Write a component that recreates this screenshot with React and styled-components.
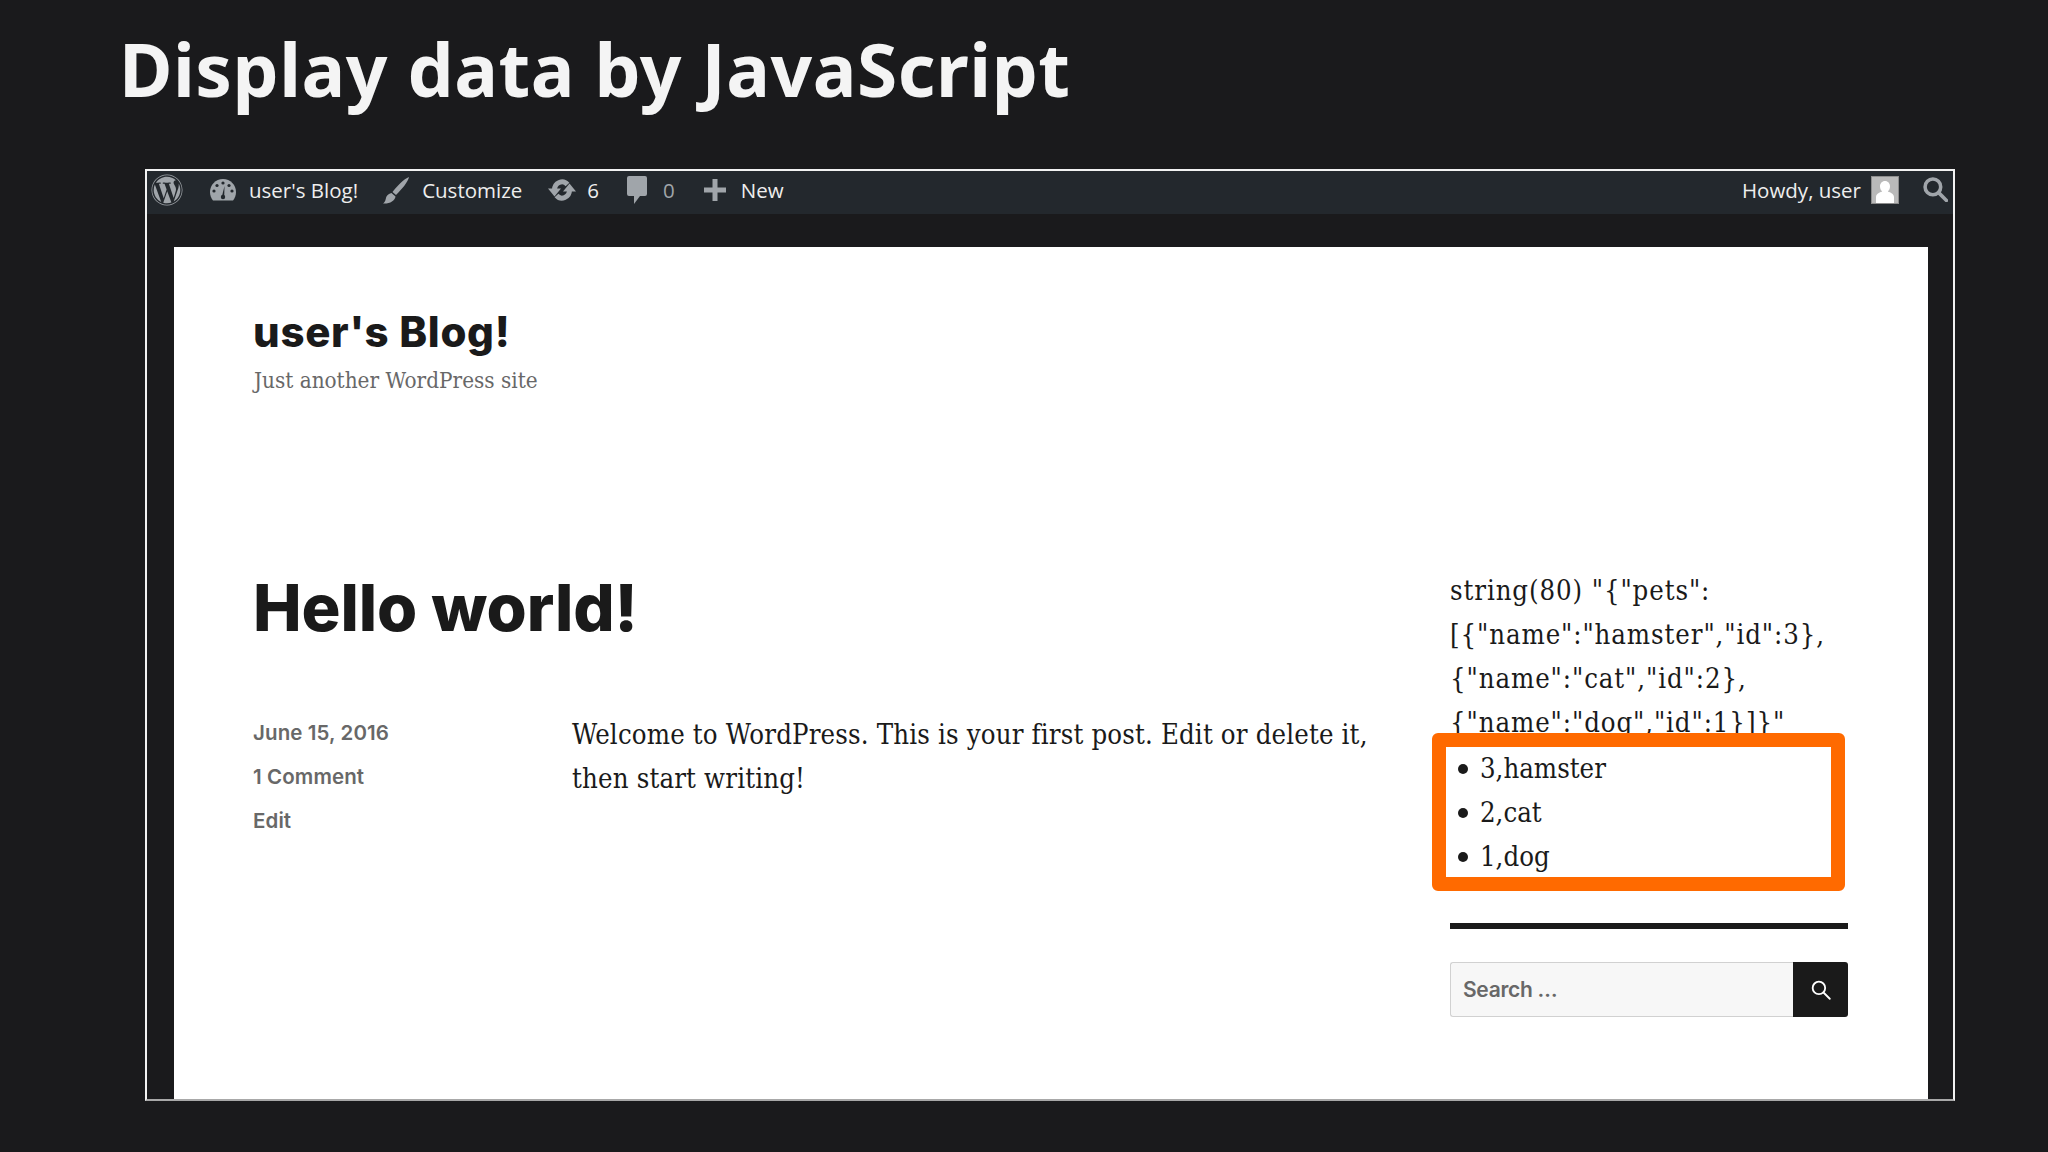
import React from 'react'
import styled, { createGlobalStyle } from 'styled-components'
import { FaWordpress } from 'react-icons/fa'

const COLORS = {
  PAGE: '#1a1a1c',
  BAR: '#23282d',
  BAR_ICON: '#a0a5aa',
  BAR_TEXT: '#eeeeee',
  INK: '#1a1a1a',
  MUTED: '#686868',
  ORANGE: '#ff6a00'
}

const SERIF = '"DejaVu Serif Condensed", "DejaVu Serif", serif'
const HEADING = 'Inter, "Liberation Sans", sans-serif'

const GlobalStyle = createGlobalStyle`
  html, body {
    margin: 0;
    background: ${COLORS.PAGE};
  }
`

const Stage = styled.div`
  width: 2048px;
  height: 1152px;
  overflow: hidden;
  background: ${COLORS.PAGE};
  display: flex;
  flex-direction: column;
`

const SlideTitle = styled.h1`
  margin: 0;
  padding: 24px 0 0 119px;
  height: 169px;
  flex: none;
  box-sizing: border-box;
  font: 700 73px/90px "Noto Sans", sans-serif;
  letter-spacing: 0.55px;
  color: #f4f4f4;
`

const Frame = styled.div`
  margin-left: 145px;
  width: 1810px;
  height: 932px;
  flex: none;
  box-sizing: border-box;
  border: 2px solid #f2f2f2;
  border-bottom-color: #a8a8a8;
  display: flex;
  flex-direction: column;
  overflow: hidden;
`

const AdminBar = styled.div`
  flex: none;
  height: 43px;
  box-sizing: border-box;
  background: ${COLORS.BAR};
  display: flex;
  align-items: center;
  justify-content: space-between;
  padding: 0 5px 6px 4px;
  font: 400 20.5px 'Open Sans', sans-serif;
  color: ${COLORS.BAR_TEXT};
`

const BarGroup = styled.div`
  display: flex;
  align-items: center;
`

const BarItem = styled.span`
  display: flex;
  align-items: center;
  gap: ${props => props.$gap || 12}px;
  margin-left: ${props => props.$left || 0}px;
  color: ${props => (props.$dim ? COLORS.BAR_ICON : COLORS.BAR_TEXT)};
  white-space: nowrap;

  svg {
    flex: none;
    color: ${COLORS.BAR_ICON};
  }
`

const Avatar = styled.span`
  width: 28px;
  height: 28px;
  margin-left: 10px;
  box-sizing: border-box;
  border: 1px solid #8c8c8c;
  background: #b9b9b9;
  display: flex;
  overflow: hidden;
`

const Backdrop = styled.div`
  flex: 1;
  min-height: 0;
  padding: 33px 25px 0 27px;
  background: ${COLORS.PAGE};
  display: flex;
`

const Sheet = styled.div`
  flex: 1;
  background: #fff;
  padding: 60px 79px 0 79px;
  color: ${COLORS.INK};
`

const SiteTitle = styled.div`
  font: 800 42px/50px ${HEADING};
  letter-spacing: 0.7px;
`

const Tagline = styled.div`
  font: 400 22.3px/30px ${SERIF};
  color: ${COLORS.MUTED};
  margin: 8px 0 0 1px;
`

const Columns = styled.div`
  display: grid;
  grid-template-columns: 1197px 398px;
  margin-top: 173px;
`

const Post = styled.article`
  min-width: 0;
`

const PostTitle = styled.h2`
  margin: 0;
  font: 800 65px/80px ${HEADING};
  letter-spacing: -0.1px;
`

const PostBody = styled.div`
  display: grid;
  grid-template-columns: 319px 1fr;
  margin-top: 62px;
`

const Meta = styled.div`
  display: flex;
  flex-direction: column;
  padding-top: 1px;
`

const MetaLine = styled.div`
  font: 600 20.5px/44px ${HEADING};
  letter-spacing: 0.1px;
  color: ${COLORS.MUTED};
`

const Paragraph = styled.p`
  margin: 0;
  padding-top: 3px;
  width: 812px;
  font: 400 27.3px/44px ${SERIF};
  letter-spacing: 0.16px;
`

const Sidebar = styled.aside`
  display: flex;
  flex-direction: column;
  min-width: 0;
`

const DumpText = styled.div`
  font: 400 27.3px/44px ${SERIF};
  letter-spacing: 0.9px;
  white-space: nowrap;
  height: 177px;
  padding-top: 1px;
  box-sizing: border-box;
`

const Highlight = styled.ul`
  margin: -12px 3px 0 -18px;
  padding: 0 0 0 34px;
  height: 158px;
  box-sizing: border-box;
  border: 14px solid ${COLORS.ORANGE};
  border-radius: 6px;
  background: #fff;
  list-style: none;
  position: relative;
`

const PetItem = styled.li`
  font: 400 27.3px/44px ${SERIF};
  position: relative;

  &::before {
    content: '';
    position: absolute;
    left: -22px;
    top: 17px;
    width: 10px;
    height: 10px;
    border-radius: 50%;
    background: ${COLORS.INK};
  }
`

const Rule = styled.div`
  height: 6px;
  margin-top: 32px;
  background: ${COLORS.INK};
`

const SearchForm = styled.div`
  display: flex;
  height: 55px;
  margin-top: 33px;
`

const SearchInput = styled.div`
  flex: 1;
  box-sizing: border-box;
  border: 1.5px solid #d1d1d1;
  border-right: none;
  border-radius: 3px 0 0 3px;
  background: #f7f7f7;
  padding-left: 12px;
  display: flex;
  align-items: center;
  font: 600 21px ${HEADING};
  letter-spacing: -0.3px;
  color: ${COLORS.MUTED};
`

const SearchButton = styled.div`
  width: 55px;
  background: ${COLORS.INK};
  border-radius: 0 3px 3px 0;
  display: flex;
  align-items: center;
  justify-content: center;
  color: #fff;
`

const DashboardIcon = () => (
  <svg width="28" height="24" viewBox="0 0 28 24">
    <path fill="currentColor" d="M14 1C6.500 1 1 7 1 14c0 3.500 1.200 6.500 3 8.500h20c1.800-2 3-5 3-8.500C27 7 21.500 1 14 1z" />
    <g fill={COLORS.BAR}>
      <circle cx="14" cy="5" r="1.600" />
      <circle cx="8" cy="7.500" r="1.600" />
      <circle cx="20" cy="7.500" r="1.600" />
      <circle cx="5" cy="13" r="1.600" />
      <circle cx="23" cy="13" r="1.600" />
      <path d="M15.500 8l-.3 11h-2.400z" />
      <circle cx="14" cy="19" r="2.200" />
    </g>
  </svg>
)

const BrushIcon = () => (
  <svg width="28" height="28" viewBox="0 0 28 28">
    <path fill="currentColor" d="M27 1c-1 5-7 12-13 18l-3.500-3C15 10 22 3 27 1zM9.500 17l4 3.500C13 25 7.500 28 1 27.500c3-2 2.500-5 3.500-7 1-1.800 3-3.200 5-3.500z" />
  </svg>
)

const UpdateIcon = () => (
  <svg width="28" height="24" viewBox="0 0 28 24">
    <g fill="none" stroke="currentColor" strokeWidth="5">
      <path d="M6.500 12a7.500 8 0 0 1 13-5.500" />
      <path d="M21.500 12a7.500 8 0 0 1-13 5.500" />
    </g>
    <path fill="currentColor" d="M0 10.500h13l-6.500 8zM28 13.500H15l6.500-8z" />
  </svg>
)

const CommentIcon = () => (
  <svg width="22" height="30" viewBox="0 0 22 30">
    <path fill="currentColor" d="M3 1h16a2 2 0 0 1 2 2v16a2 2 0 0 1-2 2h-5l-6 8v-8H3a2 2 0 0 1-2-2V3a2 2 0 0 1 2-2z" />
  </svg>
)

const PlusIcon = () => (
  <svg width="22" height="22" viewBox="0 0 22 22">
    <path fill="currentColor" d="M8.500 0h5v8.500H22v5h-8.500V22h-5v-8.500H0v-5h8.500z" />
  </svg>
)

const SearchIcon = ({ size, weight }) => (
  <svg width={size} height={size} viewBox="0 0 24 24" fill="none" stroke="currentColor" strokeWidth={weight}>
    <circle cx="9.500" cy="9.500" r="7.500" />
    <path d="M15 15l7.500 7.500" strokeLinecap="round" />
  </svg>
)

const PersonIcon = () => (
  <svg width="26" height="26" viewBox="0 0 26 26">
    <path fill="#fff" d="M13 4c3 0 5 2.400 5 5.500 0 2.200-1 4-2.200 5 3 1 6.200 2.500 6.200 5.500v6H4v-6c0-3 3.200-4.500 6.200-5.500C9 13.500 8 11.700 8 9.500 8 6.400 10 4 13 4z" />
  </svg>
)

const App = () => (
  <Stage>
    <GlobalStyle />
    <SlideTitle>Display data by JavaScript</SlideTitle>
    <Frame>
      <AdminBar>
        <BarGroup>
          <BarItem><FaWordpress size={32} /></BarItem>
          <BarItem $left={26}><DashboardIcon />user's Blog!</BarItem>
          <BarItem $left={24}><BrushIcon />Customize</BarItem>
          <BarItem $left={26} $gap={11}><UpdateIcon />6</BarItem>
          <BarItem $left={27}><CommentIcon /></BarItem>
          <BarItem $left={15} $dim>0</BarItem>
          <BarItem $left={29} $gap={15}><PlusIcon />New</BarItem>
        </BarGroup>
        <BarGroup>
          Howdy, user
          <Avatar><PersonIcon /></Avatar>
          <BarItem $left={24}><SearchIcon size={25} weight={3.4} /></BarItem>
        </BarGroup>
      </AdminBar>
      <Backdrop>
        <Sheet>
          <SiteTitle>user's Blog!</SiteTitle>
          <Tagline>Just another WordPress site</Tagline>
          <Columns>
            <Post>
              <PostTitle>Hello world!</PostTitle>
              <PostBody>
                <Meta>
                  <MetaLine>June 15, 2016</MetaLine>
                  <MetaLine>1 Comment</MetaLine>
                  <MetaLine>Edit</MetaLine>
                </Meta>
                <Paragraph>
                  Welcome to WordPress. This is your first post. Edit or delete it, then start writing!
                </Paragraph>
              </PostBody>
            </Post>
            <Sidebar>
              <DumpText>
                string(80) "&#123;"pets":<br />
                [&#123;"name":"hamster","id":3&#125;,<br />
                &#123;"name":"cat","id":2&#125;,<br />
                &#123;"name":"dog","id":1&#125;]&#125;"
              </DumpText>
              <Highlight>
                <PetItem>3,hamster</PetItem>
                <PetItem>2,cat</PetItem>
                <PetItem>1,dog</PetItem>
              </Highlight>
              <Rule />
              <SearchForm>
                <SearchInput>Search …</SearchInput>
                <SearchButton><SearchIcon size={20} weight={2.2} /></SearchButton>
              </SearchForm>
            </Sidebar>
          </Columns>
        </Sheet>
      </Backdrop>
    </Frame>
  </Stage>
)

export default App
